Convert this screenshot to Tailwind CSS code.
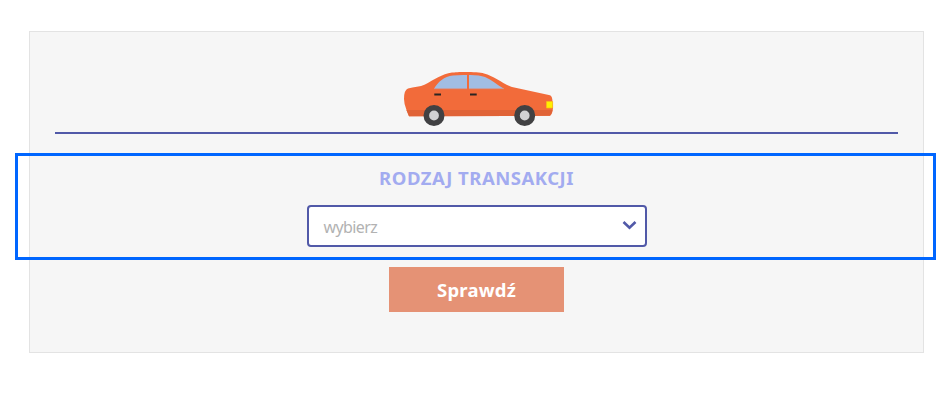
<!DOCTYPE html>
<html lang="pl">
<head>
  <meta charset="UTF-8">
  <meta name="viewport" content="width=device-width, initial-scale=1.0">
  <title>Rodzaj transakcji</title>
  <script src="https://cdn.jsdelivr.net/npm/@tailwindcss/browser@4"></script>
</head>
<body class="bg-white font-['Noto_Sans',sans-serif]">
  <main class="h-[406px] overflow-hidden pt-[31px] pl-[29px]">
    <form class="flex h-[322px] w-[895px] flex-col items-center border border-[#e3e3e3] bg-[#f6f6f6] px-[25px] pt-[39px]">
      <div class="flex h-[63px] w-full justify-center border-b-2 border-[#5159a8]">
        <svg class="ml-[4px] h-[56px] w-[151px]" viewBox="0 0 151 56" aria-hidden="true">
          <path fill="#f26b3a" d="M5 17.600C11 16 17 15.800 22 13.500C31 9 39 3 49 1.600C54 .7 75 .5 81 2.400C91 5 99 12 109 16L147 24.300Q149.300 25 149.600 31L150 37Q149.500 43 147 44.800L6 45.300L3.500 39Q1 33 1 28Q1 19 5 17.600Z"/>
          <path fill="#e06337" d="M3.400 39H149.400Q149 43 147 44.800L6 45.300Z"/>
          <path fill="#a1bde3" d="M31 17.700C35 11 41 5.500 50 4.500Q56 3.800 64 4V17.700ZM66 4Q76 3.800 82 6C89 9 94 14 101 17.700H66Z"/>
          <path stroke="#cd9694" stroke-width=".7" d="M31 17.700H64M66 17.700H101"/>
          <path stroke="#2a2522" stroke-width="2" d="M31.300 23.500H38M67 23.500H73.700"/>
          <path fill="#fff000" stroke="#f8bd17" stroke-width=".7" d="M143.500 30.500H149.600V37H143.500Z"/>
          <g fill="#d2d2d4" stroke="#414143" stroke-width="5.600">
            <circle cx="31" cy="44.500" r="7.700"/>
            <circle cx="121.700" cy="44.500" r="7.700"/>
          </g>
        </svg>
      </div>

      <!-- highlighted field, wider than the card -->
      <div class="mt-[19px] -mx-[40px] flex h-[107px] w-[921px] shrink-0 translate-x-[-1px] flex-col items-center border-3 border-[#0066ff] pt-[8px] pl-[2px]">
        <label for="transakcja" class="text-[18.5px] leading-[28px] font-bold tracking-[0.5px] whitespace-nowrap text-[#a2abf0]">RODZAJ TRANSAKCJI</label>
        <button type="button" id="transakcja" class="mt-[13px] flex h-[42px] w-[340px] items-center justify-between rounded-[4px] border-2 border-[#5159a8] bg-white pr-[8px] pl-[15px]">
          <span class="pt-[2px] text-[16px] leading-[24px] tracking-[-0.6px] text-[#b2b2b2]">wybierz</span>
          <svg class="mb-[3px] h-[10px] w-[15px]" viewBox="0 0 15 10" fill="none" stroke="#5159a8" stroke-width="2.600">
            <path d="M1.500 2L7.500 7.700L13.500 2"/>
          </svg>
        </button>
      </div>

      <button type="submit" class="mt-[7px] h-[45px] w-[175px] bg-[#e59275] text-[18.5px] leading-[28px] font-bold tracking-[0.2px] text-white">Sprawdź</button>
    </form>
  </main>
</body>
</html>
